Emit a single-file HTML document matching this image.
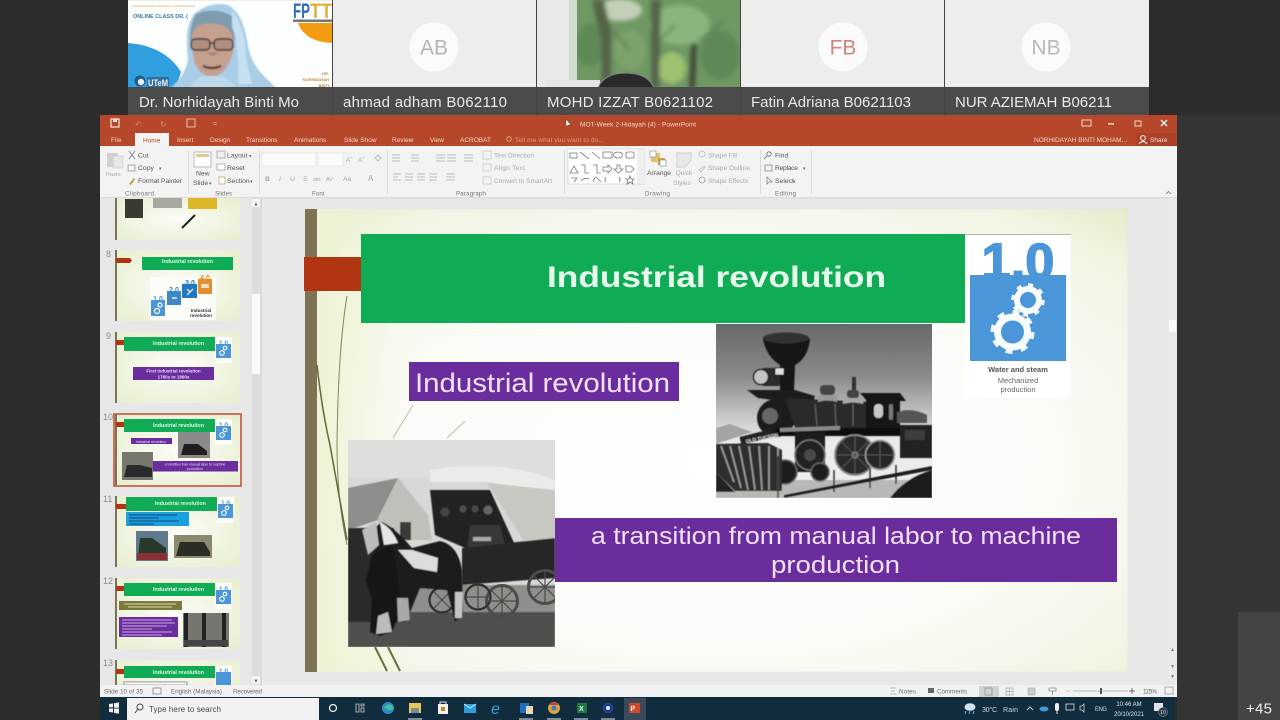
<!DOCTYPE html>
<html><head><meta charset="utf-8">
<style>
html,body{margin:0;padding:0;background:#2c2c2c;width:1280px;height:720px;overflow:hidden}
svg{display:block;position:absolute;left:0;top:0;filter:blur(.35px)}
text{font-family:"Liberation Sans",sans-serif}
.n{font-size:15px;fill:#e9e9e9}
.r{font-size:6.8px;fill:#555}
.d{font-size:6.5px;fill:#a8a8a8}
.g{font-size:6.3px;fill:#777}
.t{font-size:6.5px;fill:#f3d8cf}
.th{font-size:5.3px;font-weight:bold;fill:#dff5e6}
.num{font-size:9px;fill:#8a8a8a}
.s{font-size:6.3px;fill:#6a6a6a}
.v{font-size:7px;fill:#cfd8dd}
</style></head><body>
<svg width="1280" height="720" viewBox="0 0 1280 720" xmlns="http://www.w3.org/2000/svg">
<defs>
<filter id="b1" x="-10%" y="-10%" width="120%" height="120%"><feGaussianBlur stdDeviation=".9"/></filter>
<filter id="b2" x="-10%" y="-10%" width="120%" height="120%"><feGaussianBlur stdDeviation="2.200"/></filter>
<filter id="b05" x="-5%" y="-5%" width="110%" height="110%"><feGaussianBlur stdDeviation=".6"/></filter>
<radialGradient id="sl" cx=".5" cy=".55" r=".75"><stop offset="0" stop-color="#ffffff"/><stop offset=".5" stop-color="#fbfcf8"/><stop offset=".85" stop-color="#f1f5e3"/><stop offset="1" stop-color="#e3ecca"/></radialGradient>
<linearGradient id="lft" x1="0" y1="0" x2="1" y2="0"><stop offset="0" stop-color="#eef3d6"/><stop offset="1" stop-color="#eef3d6" stop-opacity="0"/></linearGradient>
<linearGradient id="sky" x1="0" y1="0" x2="0" y2="1"><stop offset="0" stop-color="#686868"/><stop offset=".3" stop-color="#8a8a8a"/><stop offset=".58" stop-color="#d4d4d4"/><stop offset=".68" stop-color="#ececec"/></linearGradient>
<radialGradient id="thg" cx=".5" cy=".5" r=".75"><stop offset="0" stop-color="#fbfcf6"/><stop offset="1" stop-color="#e6edcd"/></radialGradient>
<clipPath id="cL"><rect x="716" y="324" width="216" height="174"/></clipPath>
<clipPath id="cW"><rect x="348" y="440" width="207" height="207"/></clipPath>
<clipPath id="cT"><rect x="577" y="0" width="164" height="88"/></clipPath>
<clipPath id="cP"><rect x="128" y="1" width="204" height="87"/></clipPath>
</defs>

<rect width="1280" height="720" fill="#2c2c2c"/>
<rect x="1177" y="115" width="103" height="605" fill="#343434"/>
<rect x="1238" y="612" width="42" height="108" fill="#444543"/>
<text x="1246" y="713.500" font-size="15" fill="#eee" textLength="26">+45</text>

<!-- participant tiles -->
<rect x="128" y="0" width="1021" height="115" fill="#ededed"/>
<g clip-path="url(#cP)">
<rect x="128" y="0" width="204" height="88" fill="#fdfefe"/>
<path d="M128 43 Q165 46 181 72 L176 88 H128Z" fill="#2f9fe0"/>
<path d="M298 23 H332 V43 Q305 42 298 23Z" fill="#f39c12"/>
<text x="133" y="18" font-size="5.500" font-weight="bold" fill="#3c7a9e" textLength="55">ONLINE CLASS DR. (</text>
<text x="133" y="7" font-size="3" fill="#e39a3a" textLength="62">EXCELLENCE THROUGH COMPETENCE</text>
<text x="293" y="18" font-size="21" font-weight="bold" fill="#2f6fb0" textLength="17" lengthAdjust="spacingAndGlyphs">FP</text>
<text x="310" y="18" font-size="21" font-weight="bold" fill="#e8b040" textLength="22" lengthAdjust="spacingAndGlyphs">TT</text>
<rect x="293" y="19.500" width="39" height="2.500" fill="#777"/>
<text x="329" y="75" font-size="4" font-weight="bold" fill="#c9853a" text-anchor="end">DR.</text>
<text x="329" y="81" font-size="4" font-weight="bold" fill="#c9853a" text-anchor="end">NORHIDAYAH</text>
<text x="329" y="87" font-size="4" font-weight="bold" fill="#c9853a" text-anchor="end">BINTI</text>
<circle cx="140" cy="81" r="5.500" fill="#1d5c8a"/><circle cx="141" cy="82" r="3.200" fill="#eef"/>
<rect x="147" y="77" width="22" height="10" fill="#2f6f9c"/>
<text x="148" y="86" font-size="9" font-weight="bold" fill="#f2f7fb" textLength="20" lengthAdjust="spacingAndGlyphs">UTeM</text>
<g filter="url(#b1)">
<path d="M170 88 Q186 76 188 58 Q184 28 194 14 Q210 1 228 5 Q242 12 247 40 Q250 62 262 74 L276 88Z" fill="#a9cde6"/>
<path d="M196 14 Q214 6 232 16 Q236 30 236 40 L190 40 Q190 24 196 14Z" fill="#7e9cab"/>
<path d="M192 38 Q192 26 204 24 Q224 22 231 32 Q236 44 232 56 Q226 74 212 78 Q196 74 193 56Z" fill="#c4a08f"/>
<rect x="191" y="39" width="19" height="11" rx="4" fill="#b08d80" stroke="#35282a" stroke-width="1.400"/>
<rect x="214" y="39" width="19" height="11" rx="4" fill="#b08d80" stroke="#35282a" stroke-width="1.400"/>
<path d="M210 43H214" stroke="#35282a" stroke-width="1.400"/>
<path d="M203 66 Q212 70 221 66" stroke="#5b3a34" stroke-width="2.400" fill="none"/>
<path d="M207 52 Q212 60 218 52" fill="#ae8676"/>
<path d="M232 10 Q246 30 246 58 L252 84 L238 84 Q240 50 232 26Z" fill="#c6e0f1"/>
<path d="M190 88 Q194 80 204 76 L224 76 L238 88Z" fill="#bcd9ec"/>
</g>
</g>
<circle cx="434" cy="47" r="24.500" fill="#fbfbfb"/>
<text x="434" y="54.500" font-size="21" fill="#b4b4b4" text-anchor="middle">AB</text>
<rect x="537" y="0" width="204" height="88" fill="#e9e9e9"/>
<rect x="569" y="0" width="8" height="88" fill="#d6dad4"/>
<g clip-path="url(#cT)">
<rect x="577" y="0" width="164" height="88" fill="#6f9863"/>
<g filter="url(#b2)">
<ellipse cx="620" cy="10" rx="22" ry="11" fill="#c3cfb9"/>
<ellipse cx="590" cy="45" rx="14" ry="22" fill="#5f8a55"/>
<ellipse cx="630" cy="50" rx="16" ry="20" fill="#7ca36a"/>
<ellipse cx="680" cy="25" rx="30" ry="20" fill="#8ab67e"/>
<ellipse cx="672" cy="68" rx="14" ry="16" fill="#9fc070"/>
<ellipse cx="720" cy="55" rx="20" ry="25" fill="#5e8a58"/>
<path d="M592 0 H604 L611 30 L611 88 H602 L601 40Z" fill="#55634a"/>
<path d="M651 0H661L659 88H651Z" fill="#56634c"/>
<path d="M691 44 H697 L695 88H689Z" fill="#3f4a34"/>
<path d="M612 30L630 50M700 40L725 20M660 40L675 25" stroke="#55684a" stroke-width="1.600"/>
</g>
</g>
<path d="M546 88 V80 H600 V88Z" fill="#e6e6e6"/>
<path d="M598 88 Q604 73 626 73 Q648 73 654 88Z" fill="#2a2a2a" stroke="#888" stroke-width="1"/>
<circle cx="843" cy="47" r="24.500" fill="#fbfbfb"/>
<text x="843" y="54.500" font-size="21" fill="#d0837f" text-anchor="middle">FB</text>
<circle cx="1046" cy="47" r="24.500" fill="#fbfbfb"/>
<text x="1046" y="54.500" font-size="21" fill="#b9b9b9" text-anchor="middle">NB</text>
<rect x="128" y="87" width="1021" height="28" fill="#4b4b4b"/>
<path d="M332.500 0V115M536.500 0V115M740.500 0V115M944.500 0V115" stroke="#444" stroke-width="1"/>
<text class="n" x="139" y="107" textLength="160">Dr. Norhidayah Binti Mo</text>
<text class="n" x="343" y="107" textLength="164">ahmad adham B062110</text>
<text class="n" x="547" y="107" textLength="166">MOHD IZZAT B0621102</text>
<text class="n" x="751" y="107" textLength="160">Fatin Adriana B0621103</text>
<text class="n" x="955" y="107" textLength="157">NUR AZIEMAH B06211</text>

<!-- PowerPoint window -->
<rect x="100" y="115" width="1077" height="582" fill="#e8e8e8"/>
<rect x="100" y="115" width="1077" height="31" fill="#b7472a"/>
<rect x="135" y="133" width="34" height="14" fill="#f4f4f4"/>
<rect x="1136" y="133" width="40" height="13" fill="#ac4127"/>
<rect x="111" y="119" width="8" height="8" fill="none" stroke="#f4dcd4" stroke-width="1.300"/>
<rect x="113" y="119" width="4" height="3" fill="#f4dcd4"/>
<text x="135" y="127" font-size="8" fill="#cf8c78">↶</text><text x="160" y="127" font-size="8" fill="#cf8c78">↻</text>
<rect x="187" y="119" width="8" height="8" fill="none" stroke="#e8c2b6" stroke-width="1"/>
<text x="213" y="126" font-size="7" fill="#e8c2b6">=</text>
<path d="M566 119 L566 127 L568 125 L571 125Z" fill="#fff" stroke="#222" stroke-width=".4"/>
<text x="580" y="126.500" font-size="6.500" fill="#f3d8cf" textLength="116">MOT-Week 2-Hidayah (4) - PowerPoint</text>
<rect x="1082" y="120" width="9" height="6" fill="none" stroke="#f3d8cf" stroke-width="1"/>
<rect x="1108" y="123" width="6" height="1.500" fill="#f3d8cf"/>
<rect x="1135" y="121" width="6" height="5" fill="none" stroke="#f3d8cf" stroke-width="1"/>
<path d="M1161 120L1167 126M1167 120L1161 126" stroke="#fff" stroke-width="1.400"/>
<text class="t" x="111" y="142">File</text>
<text x="143" y="142.500" font-size="6.500" fill="#b7472a">Home</text>
<text class="t" x="177" y="142">Insert</text>
<text class="t" x="210" y="142">Design</text>
<text class="t" x="246" y="142">Transitions</text>
<text class="t" x="294" y="142">Animations</text>
<text class="t" x="344" y="142">Slide Show</text>
<text class="t" x="392" y="142">Review</text>
<text class="t" x="430" y="142">View</text>
<text class="t" x="460" y="142">ACROBAT</text>
<circle cx="509" cy="139" r="2.300" fill="none" stroke="#e8b5a5" stroke-width=".8"/>
<text x="515" y="142" font-size="6.500" fill="#dd9e8a" textLength="89">Tell me what you want to do...</text>
<text class="t" x="1034" y="142" textLength="93">NORHIDAYAH BINTI MOHAM...</text>
<circle cx="1143" cy="138" r="2.400" fill="none" stroke="#fff" stroke-width="1"/><path d="M1139 144Q1143 139 1147 144" fill="none" stroke="#fff" stroke-width="1"/>
<text x="1150" y="142" font-size="6.500" fill="#f8e6e0">Share</text>

<!-- ribbon -->
<rect x="100" y="146" width="1077" height="51" fill="#f3f3f3"/>
<rect x="100" y="197" width="1077" height="1.500" fill="#dcdcdc"/>
<path d="M188.500 150V194M259.500 150V194M387.500 150V194M564.500 150V194M760.500 150V194M811.500 150V194" stroke="#dadada" stroke-width="1"/>

<!-- clipboard -->
<rect x="107" y="153" width="11" height="14" fill="#cfcfcf"/><rect x="113" y="156" width="10" height="12" fill="#e6e6e6" stroke="#c4c4c4" stroke-width=".5"/>
<text x="106" y="176" font-size="5.800" fill="#aaa">Paste</text>
<path d="M129 151L135 159M135 151L129 159" stroke="#888" stroke-width="1"/>
<text class="r" x="138" y="157.500">Cut</text>
<rect x="128" y="165" width="7" height="6" fill="none" stroke="#999" stroke-width=".8"/>
<text class="r" x="138" y="170">Copy</text>
<text x="159" y="170" font-size="5" fill="#666">▾</text>
<path d="M129 184l5-6 1 1-4 6z" fill="#c49a3a"/>
<text class="r" x="138" y="183" textLength="44">Format Painter</text>
<text class="g" x="125" y="195.500" textLength="29">Clipboard</text>

<!-- slides group -->
<rect x="194" y="152" width="17" height="15" fill="#fff" stroke="#aaa" stroke-width=".8"/><rect x="196" y="154" width="13" height="3" fill="#e6c98c"/>
<text class="r" x="196" y="175.500">New</text>
<text class="r" x="193" y="185">Slide</text><text x="209" y="185" font-size="5" fill="#666">▾</text>
<rect x="217" y="151" width="8" height="7" fill="#eee" stroke="#999" stroke-width=".7"/>
<text class="r" x="227" y="157.500">Layout</text><text x="249" y="157.500" font-size="5" fill="#666">▾</text>
<rect x="217" y="164" width="8" height="6" fill="#fff" stroke="#999" stroke-width=".7"/>
<text class="r" x="227" y="170">Reset</text>
<rect x="219" y="177" width="6" height="7" fill="#fff" stroke="#b9a15f" stroke-width=".7"/>
<text class="r" x="227" y="183">Section</text><text x="250" y="183" font-size="5" fill="#666">▾</text>
<text class="g" x="215" y="195.500">Slides</text>

<!-- font -->
<rect x="262" y="153" width="54" height="13" fill="#fcfcfc" stroke="#e2e2e2" stroke-width=".7"/>
<rect x="318" y="153" width="25" height="13" fill="#fcfcfc" stroke="#e2e2e2" stroke-width=".7"/>
<text class="d" x="346" y="162">Aˆ</text><text class="d" x="358" y="162">Aˇ</text>
<path d="M375 158l3-3 3 3-3 3z" fill="none" stroke="#bcbcbc"/>
<g font-size="6.800" fill="#a4a4a4">
<text x="265" y="181" font-weight="bold">B</text><text x="279" y="181" font-style="italic">I</text><text x="290" y="181">U</text><text x="303" y="181">S</text><text x="313" y="181" font-size="5">abc</text><text x="326" y="181" font-size="5.500">AV</text><text x="343" y="181">Aa</text><text x="368" y="181" font-size="8">A</text>
</g>
<text class="g" x="312" y="195.500">Font</text>

<!-- paragraph -->
<g stroke="#bcbcbc" stroke-width=".9" fill="none">
<path d="M392 155h8M392 158h8M392 161h8"/>
<path d="M411 155h8M411 158h8M411 161h8"/>
<path d="M436 155h9M436 158h9M436 161h9"/>
<path d="M447 155h9M447 158h9M447 161h9"/>
<path d="M464 155h9M464 158h9M464 161h9"/>
<path d="M393 174h8M393 177h5M393 180h8"/>
<path d="M405 174h8M405 177h8M405 180h8"/>
<path d="M417 174h8M417 177h8M417 180h8"/>
<path d="M429 174h8M429 177h8M429 180h8"/>
<path d="M446 174h9M446 177h9M446 180h9"/>
</g>
<rect x="483" y="151" width="8" height="8" fill="none" stroke="#c2c2c2" stroke-width=".7"/>
<text class="d" x="494" y="157.500" textLength="40">Text Direction</text>
<rect x="483" y="164" width="8" height="7" fill="none" stroke="#c2c2c2" stroke-width=".7"/>
<text class="d" x="494" y="170" textLength="31">Align Text</text>
<rect x="483" y="177" width="8" height="7" fill="none" stroke="#c2c2c2" stroke-width=".7"/>
<text class="d" x="494" y="183" textLength="58">Convert to SmartArt</text>
<text class="g" x="456" y="195.500" textLength="30">Paragraph</text>

<!-- shapes gallery -->
<rect x="568" y="149" width="76" height="35" fill="#fff" stroke="#d2d2d2" stroke-width=".8"/>
<rect x="637" y="150" width="7" height="33" fill="#efefef"/>
<g fill="none" stroke="#777" stroke-width=".8">
<rect x="570" y="153" width="7" height="5"/><path d="M580 152l9 7M592 152l8 7"/>
<rect x="603" y="152" width="9" height="6"/><ellipse cx="618" cy="155" rx="4.500" ry="3"/><rect x="626" y="152" width="8" height="6" rx="1.500"/>
<path d="M570 173l4-7 4 7zM581 165h4v8h4M593 165h4v8h4M603 167h5v-2l4 4-4 4v-2h-5zM617 165h3v4h3l-4.500 4-4.500-4h3z"/>
<path d="M626 166h5l3 3-3 3h-5z"/>
<path d="M571 178h6M577 178l-3 4M581 181q3-4 8-2M593 182q2-6 4-4t4 4M606 177q-2 3 0 5M619 177q2 3 0 5M630 176l1 3h3l-2 2 1 3-3-2-3 2 1-3-2-2h3z"/>
</g>
<text x="647" y="175" font-size="6.800" fill="#555" textLength="24">Arrange</text>
<rect x="651" y="153" width="9" height="9" fill="#e2c36c"/><rect x="658" y="158" width="7" height="7" fill="#c9a24a"/>
<rect x="650" y="151" width="6" height="6" fill="#fff" stroke="#888" stroke-width=".6"/><rect x="660" y="160" width="6" height="6" fill="#fff" stroke="#888" stroke-width=".6"/>
<text x="684" y="175" font-size="6.500" fill="#a8a8a8" text-anchor="middle">Quick</text>
<text x="682" y="185" font-size="6.500" fill="#a8a8a8" text-anchor="middle">Styles</text>
<path d="M677 153h14v7l-6 7h-8z" fill="#e8e8e8" stroke="#c4c4c4" stroke-width=".7"/>
<circle cx="702" cy="154" r="3" fill="none" stroke="#bbb" stroke-width=".8"/>
<text class="d" x="708" y="157.500" textLength="29">Shape Fill</text>
<path d="M699 170l5-4 1 1-4 5z" fill="none" stroke="#bbb" stroke-width=".8"/>
<text class="d" x="708" y="170" textLength="42">Shape Outline</text>
<circle cx="702" cy="180" r="3" fill="none" stroke="#999" stroke-width=".8"/>
<text class="d" x="708" y="183" textLength="40">Shape Effects</text>
<text class="g" x="645" y="195.500" textLength="25">Drawing</text>

<!-- editing -->
<circle cx="769" cy="154" r="2.200" fill="none" stroke="#666" stroke-width=".8"/><path d="M767 156l-3 3" stroke="#666" stroke-width=".8"/>
<text class="r" x="775" y="157.500">Find</text>
<rect x="765" y="165" width="7" height="6" fill="none" stroke="#888" stroke-width=".8"/>
<text class="r" x="775" y="170" textLength="23">Replace</text><text x="803" y="170" font-size="5" fill="#666">▾</text>
<path d="M767 177v7l2-2 3 0z" fill="none" stroke="#888" stroke-width=".8"/>
<text class="r" x="775" y="183">Select</text><text x="793" y="183" font-size="5" fill="#666">▾</text>
<text class="g" x="775" y="195.500" textLength="21">Editing</text>
<path d="M1166 194l2.500-2.500 2.500 2.500" fill="none" stroke="#777" stroke-width=".8"/>

<!-- thumbnails pane -->
<rect x="100" y="198" width="152" height="487" fill="#e7e7e7"/>
<rect x="252" y="198" width="9" height="487" fill="#dcdcdc"/>
<rect x="252" y="294" width="8" height="80" fill="#fbfbfb"/>
<rect x="252" y="199" width="8" height="8" fill="#f4f4f4"/><text x="253.500" y="205.500" font-size="5" fill="#555">▲</text>
<rect x="252" y="676" width="8" height="8" fill="#f4f4f4"/><text x="253.500" y="682.500" font-size="5" fill="#555">▼</text>
<path d="M261.500 198V685" stroke="#d8d8d8"/>

<!-- thumb 7 -->
<rect x="115" y="198" width="125" height="42" fill="url(#thg)"/>
<rect x="115" y="198" width="2" height="42" fill="#7d7354"/>
<path d="M125 199h18v19h-18z" fill="#3a3a30"/><path d="M153 198h29v10h-29z" fill="#a8a8a0"/><path d="M188 198h29v11h-29z" fill="#dcb828"/>
<path d="M182 228l13-13" stroke="#222" stroke-width="2"/>
<!-- thumb 8 -->
<rect x="115" y="250" width="125" height="71" fill="url(#thg)"/>
<rect x="115" y="250" width="2" height="71" fill="#7d7354"/>
<path d="M116 258h14l2 2.500-2 2.500h-14z" fill="#b03510"/>
<rect x="142" y="257" width="91" height="13" fill="#0fac55"/>
<text class="th" x="162" y="263" textLength="51">Industrial revolution</text>
<rect x="150" y="277" width="66" height="43" fill="#fcfdf9"/>
<rect x="151" y="300" width="14" height="16" fill="#4a96d8"/><text x="158" y="301" font-size="7" font-weight="bold" fill="#4a96d8" text-anchor="middle">1.0</text>
<rect x="167" y="291" width="14" height="14" fill="#3f87c6"/><text x="174" y="292" font-size="7" font-weight="bold" fill="#3f87c6" text-anchor="middle">2.0</text>
<rect x="182" y="284" width="15" height="14" fill="#1f78c0"/><text x="190" y="285" font-size="7" font-weight="bold" fill="#1f78c0" text-anchor="middle">3.0</text>
<rect x="198" y="279" width="14" height="15" fill="#e58d2e"/><text x="205" y="280" font-size="7" font-weight="bold" fill="#e58d2e" text-anchor="middle">4.0</text>
<g fill="none" stroke="#fff" stroke-width="1.200"><circle cx="160" cy="305" r="2"/><circle cx="157" cy="311" r="2.500"/><path d="M172 298h5M187 289l3 3-3 3M193 289l-3 3"/></g>
<rect x="201" y="284" width="8" height="4" fill="#fff" opacity=".7"/>
<text x="201" y="312" font-size="4.500" font-weight="bold" fill="#333" text-anchor="middle">Industrial</text>
<text x="201" y="317" font-size="4.500" font-weight="bold" fill="#333" text-anchor="middle">revolution</text>
<!-- thumb 9 -->
<rect x="115" y="332" width="125" height="71" fill="url(#thg)"/>
<rect x="115" y="332" width="2" height="71" fill="#7d7354"/>
<rect x="116" y="340" width="8" height="5" fill="#b03510"/>
<rect x="124" y="337" width="91" height="14" fill="#0fac55"/>
<text class="th" x="153" y="345" textLength="51">Industrial revolution</text>
<rect x="215" y="337" width="17" height="26" fill="#fcfdfa"/><rect x="216" y="344" width="15" height="14" fill="#4a96d8"/><text x="223.500" y="345" font-size="6.500" font-weight="bold" fill="#4a96d8" text-anchor="middle">1.0</text>
<g fill="none" stroke="#fff" stroke-width="1.100"><circle cx="225" cy="348" r="1.800"/><circle cx="222" cy="353" r="2.300"/></g>
<rect x="133" y="367" width="81" height="13" fill="#6b2c9e"/>
<text x="173.500" y="372.500" font-size="4.500" font-weight="bold" fill="#eadcf5" text-anchor="middle">First industrial revolution</text>
<text x="173.500" y="378.500" font-size="4.500" font-weight="bold" fill="#eadcf5" text-anchor="middle">1760s to 1860s</text>
<!-- thumb 10 -->
<rect x="114" y="414" width="127" height="72" fill="url(#thg)" stroke="#c0583a" stroke-width="1.600"/>
<rect x="115" y="414" width="2" height="71" fill="#7d7354"/>
<rect x="116" y="422" width="8" height="5" fill="#b03510"/>
<rect x="124" y="419" width="91" height="13" fill="#0fac55"/>
<text class="th" x="153" y="427" textLength="51">Industrial revolution</text>
<rect x="215" y="419" width="17" height="26" fill="#fcfdfa"/><rect x="216" y="426" width="15" height="14" fill="#4a96d8"/><text x="223.500" y="427" font-size="6.500" font-weight="bold" fill="#4a96d8" text-anchor="middle">1.0</text>
<g fill="none" stroke="#fff" stroke-width="1.100"><circle cx="225" cy="430" r="1.800"/><circle cx="222" cy="435" r="2.300"/></g>
<rect x="131" y="438" width="41" height="6" fill="#6b2c9e"/><text x="151" y="443" font-size="3.500" fill="#eadcf5" text-anchor="middle">Industrial revolution</text>
<rect x="178" y="432" width="32" height="26" fill="#8a8a8a"/><path d="M181 455l3-11h14l9 7v4z" fill="#1e1e1e"/>
<rect x="122" y="452" width="31" height="28" fill="#77776f"/><path d="M124 477l3-12h13l12 3v9z" fill="#2a2a2a"/>
<rect x="153" y="461" width="85" height="10.500" fill="#6b2c9e"/>
<text x="195" y="465.500" font-size="3.300" fill="#eadcf5" text-anchor="middle">a transition from manual labor to machine</text>
<text x="195" y="470" font-size="3.300" fill="#eadcf5" text-anchor="middle">production</text>
<!-- thumb 11 -->
<rect x="115" y="496" width="125" height="71" fill="url(#thg)"/>
<rect x="115" y="496" width="2" height="71" fill="#7d7354"/>
<rect x="116" y="504" width="10" height="5" fill="#b03510"/>
<rect x="126" y="497" width="91" height="14" fill="#0fac55"/>
<text class="th" x="155" y="505" textLength="51">Industrial revolution</text>
<rect x="217" y="497" width="17" height="26" fill="#fcfdfa"/><rect x="218" y="504" width="15" height="14" fill="#4a96d8"/><text x="225.500" y="505" font-size="6.500" font-weight="bold" fill="#4a96d8" text-anchor="middle">1.0</text>
<g fill="none" stroke="#fff" stroke-width="1.100"><circle cx="227" cy="508" r="1.800"/><circle cx="224" cy="513" r="2.300"/></g>
<rect x="126" y="512" width="63" height="14" fill="#1a9fe0"/>
<path d="M129 515h48M129 518h30M129 521h50M129 524h25" stroke="#174a74" stroke-width=".9"/>
<rect x="136" y="531" width="32" height="30" fill="#5e7a8c"/><path d="M138 556l2-18h12l14 10v8z" fill="#2a3a2a"/><rect x="137" y="553" width="30" height="7" fill="#8a3034"/>
<rect x="174" y="535" width="38" height="23" fill="#8a8a70"/><path d="M176 556l4-14h24l6 10v4z" fill="#2e2a24"/>
<!-- thumb 12 -->
<rect x="115" y="578" width="125" height="71" fill="url(#thg)"/>
<rect x="115" y="578" width="2" height="71" fill="#7d7354"/>
<rect x="116" y="586" width="8" height="5" fill="#b03510"/>
<rect x="124" y="583" width="91" height="13" fill="#0fac55"/>
<text class="th" x="153" y="591" textLength="51">Industrial revolution</text>
<rect x="215" y="583" width="17" height="26" fill="#fcfdfa"/><rect x="216" y="590" width="15" height="14" fill="#4a96d8"/><text x="223.500" y="591" font-size="6.500" font-weight="bold" fill="#4a96d8" text-anchor="middle">1.0</text>
<g fill="none" stroke="#fff" stroke-width="1.100"><circle cx="225" cy="594" r="1.800"/><circle cx="222" cy="599" r="2.300"/></g>
<rect x="119" y="601" width="63" height="9" fill="#7a7a3a"/>
<path d="M124 604h52M128 607h44" stroke="#d8d8a8" stroke-width="1"/>
<rect x="119" y="617" width="59" height="20" fill="#6b2c9e"/>
<path d="M122 620h50M122 623h53M122 626h45M122 629h30M122 632h50M122 635h40" stroke="#c8a8e4" stroke-width=".9"/>
<rect x="183" y="613" width="46" height="34" fill="#77756f"/><path d="M186 613v34M204 613v34M224 613v34" stroke="#222" stroke-width="4"/><rect x="184" y="640" width="44" height="6" fill="#444"/>
<!-- thumb 13 -->
<rect x="115" y="660" width="125" height="25" fill="url(#thg)"/>
<rect x="115" y="660" width="2" height="25" fill="#7d7354"/>
<rect x="116" y="669" width="8" height="5" fill="#b03510"/>
<rect x="124" y="666" width="91" height="12" fill="#0fac55"/>
<text class="th" x="153" y="674" textLength="51">Industrial revolution</text>
<rect x="215" y="666" width="17" height="19" fill="#fcfdfa"/><rect x="216" y="672" width="15" height="13" fill="#4a96d8"/><text x="223.500" y="673" font-size="6.500" font-weight="bold" fill="#4a96d8" text-anchor="middle">1.0</text>
<rect x="124" y="682" width="63" height="3" fill="#fff" stroke="#333" stroke-width=".5"/>
<text class="num" x="106" y="257">8</text>
<text class="num" x="106" y="339">9</text>
<text class="num" x="103" y="420">10</text>
<text class="num" x="103" y="502">11</text>
<text class="num" x="103" y="584">12</text>
<text class="num" x="103" y="666">13</text>

<!-- main slide -->
<rect x="305" y="209" width="823" height="463" fill="url(#sl)" stroke="#e0e0e0" stroke-width=".5"/>
<rect x="317" y="209" width="90" height="463" fill="url(#lft)"/>
<rect x="305" y="209" width="12" height="463" fill="#7d7354"/>
<path d="M347 296 Q338 350 337 445 Q337 500 347 545" stroke="#7b8a56" stroke-width="1" fill="none"/>
<path d="M317 365 Q322 410 330 445 Q338 490 347 540" stroke="#5f6a34" stroke-width="1.500" fill="none"/>
<path d="M375 647 L387 671 M388 647 L400 671" stroke="#6a7040" stroke-width="2" fill="none"/>
<path d="M393 438 L413 405 M447 438 L465 421" stroke="#b4b8a0" stroke-width=".9" fill="none"/>
<rect x="304" y="257" width="57" height="34" fill="#b03510"/>
<rect x="361" y="234" width="604" height="89" fill="#0fac55"/>
<text x="547" y="287" font-size="30" font-weight="bold" fill="#e7f9ed" textLength="339" lengthAdjust="spacingAndGlyphs">Industrial revolution</text>
<rect x="409" y="362" width="270" height="39" fill="#6b2c9e"/>
<text x="415" y="392" font-size="27" fill="#f0e2fb" textLength="255" lengthAdjust="spacingAndGlyphs">Industrial revolution</text>

<!-- badge -->
<rect x="965" y="235" width="106" height="164" fill="#fff"/>
<rect x="965" y="234" width="106" height="1" fill="#aeb8a6"/>
<text x="1018" y="279" font-size="51" font-weight="bold" fill="#4a96d8" stroke="#4a96d8" stroke-width="1.500" text-anchor="middle" textLength="73" lengthAdjust="spacingAndGlyphs">1.0</text>
<rect x="970" y="275" width="96" height="86" fill="#4a96d8"/>
<g fill="none" stroke="#f7fbff">
<circle cx="1028" cy="300" r="11" stroke-width="6"/>
<circle cx="1028" cy="300" r="15" stroke-width="3.500" stroke-dasharray="5 6.780"/>
<circle cx="1012.500" cy="332" r="15" stroke-width="7"/>
<circle cx="1012.500" cy="332" r="20" stroke-width="4" stroke-dasharray="7 8.700"/>
</g>
<text x="1018" y="372" font-size="7.500" font-weight="bold" fill="#555" text-anchor="middle">Water and steam</text>
<text x="1018" y="383" font-size="7.500" fill="#666" text-anchor="middle">Mechanized</text>
<text x="1018" y="392" font-size="7.500" fill="#666" text-anchor="middle">production</text>

<!-- locomotive -->
<g clip-path="url(#cL)">
<rect x="716" y="324" width="216" height="174" fill="url(#sky)"/>
<g filter="url(#b05)">
<path d="M716 428l14-4 22 8-36 12z" fill="#a4a4a4"/>
<path d="M716 480H932V498H716Z" fill="#b8b8b4"/>
<path d="M763 339 Q786 328 810 339 Q808 358 795 365 L794 390 H780 L780 365 Q766 356 763 339Z" fill="#161616"/>
<ellipse cx="786" cy="338" rx="23" ry="5.500" fill="#333"/>
<rect x="762" y="368" width="18" height="18" rx="2" fill="#2a2a2a"/>
<circle cx="761" cy="377" r="7.500" fill="#c4c4c4" stroke="#222" stroke-width="1.500"/>
<rect x="775" y="368" width="9" height="7" fill="#e0e0e0" stroke="#222"/>
<path d="M747 390H795L815 396L812 405L758 398Z" fill="#1a1a1a"/>
<circle cx="776" cy="418" r="19" fill="#1a1a1a"/><circle cx="770" cy="416" r="8" fill="#666"/>
<path d="M785 398 L870 402 Q873 412 873 428 L795 428 Z" fill="#2c2c2c"/>
<path d="M815 404l2 22M835 404l1 22M853 404l0 22" stroke="#666" stroke-width="1.100"/>
<path d="M818 402 q9-3 19 0 v-7 h-19z" fill="#9a9a9a"/><rect x="820" y="385" width="15" height="10" rx="4" fill="#444"/>
<path d="M843 404 q10-3 20 0 v-7 h-20z" fill="#a8a8a8"/><rect x="847" y="390" width="12" height="8" rx="3" fill="#444"/><rect x="852" y="377" width="4" height="13" fill="#333"/>
<path d="M860 393H900L906 401H900V432H866V400Z" fill="#161616"/>
<rect x="874" y="404" width="9" height="14" rx="4" fill="#c8c8c8"/><rect x="889" y="404" width="4" height="16" rx="2" fill="#777"/>
<path d="M897 412q15-5 30 3v8H897z" fill="#555"/>
<rect x="900" y="425" width="32" height="33" fill="#242424"/>
<rect x="905" y="430" width="20" height="10" fill="#3e3e3e"/>
<rect x="775" y="428" width="125" height="8" fill="#111"/>
<rect x="795" y="432" width="30" height="40" fill="#1a1a1a"/>
<circle cx="810" cy="455" r="15" fill="#222" stroke="#777" stroke-width="1.500"/><circle cx="810" cy="455" r="6" fill="#4a4a4a"/>
<circle cx="855" cy="455" r="20" fill="#2a2a2a" stroke="#888" stroke-width="1.800"/><circle cx="855" cy="455" r="3.500" fill="#999"/>
<path d="M855 436v38M836 455h38M842 442l26 26M868 442l-26 26" stroke="#555" stroke-width="1.100"/>
<circle cx="880" cy="455" r="14.500" fill="#282828" stroke="#999" stroke-width="1.600"/>
<path d="M880 441v28M866 455h28" stroke="#555" stroke-width="1.100"/>
<rect x="780" y="428" width="60" height="4" fill="#8a8a8a" transform="rotate(-2 780 430)"/>
<rect x="740" y="433" width="32" height="8" fill="#222" transform="rotate(-14 756 437)"/>
<text x="745" y="441" font-size="5" font-weight="bold" fill="#ddd" transform="rotate(-12 756 437)">OLD TUCSON</text>
<circle cx="785" cy="472" r="12" fill="#1b1b1b" stroke="#666" stroke-width="1.500"/>
<circle cx="820" cy="472" r="9" fill="#1b1b1b" stroke="#666" stroke-width="1.500"/>
<path d="M716 444 L768 443 L782 450 V491 H735 L716 472 Z" fill="#2e2e2e"/>
<path d="M721 446l13 36M730 446l11 42M739 446l9 44M749 446l6 44M759 446l3 44M769 446v44M778 448v42" stroke="#9a9a9a" stroke-width="1.800"/>
<path d="M716 472L735 492H716Z" fill="#222"/>
<path d="M784 495 L932 466 V470 L784 498Z" fill="#1c1c1c"/>
<path d="M890 498 Q905 478 932 470 V498Z" fill="#1c1c1c"/>
<path d="M778 456V498M834 470V492M870 468V488M896 465V484" stroke="#222" stroke-width="1.400"/>
</g>
</g>

<!-- wagon -->
<g clip-path="url(#cW)">
<rect x="348" y="440" width="207" height="207" fill="#d8d8d6"/>
<g filter="url(#b05)">
<rect x="348" y="440" width="207" height="38" fill="#dededc"/>
<path d="M430 470 Q500 458 555 480 V495 L490 482 H430Z" fill="#ebebe9"/>
<path d="M348 488 L398 478 L425 512 L378 520 L348 530Z" fill="#8e8e8a"/>
<path d="M398 478 L428 515 L432 540 H378 L378 518Z" fill="#c0c0bb"/>
<rect x="400" y="522" width="11" height="18" fill="#3a3a3a"/>
<path d="M487 483 L555 490 V540 L525 543Z" fill="#c8c8c3"/>
<path d="M430 490 H490 L515 545 L470 550 L435 535Z" fill="#232323"/>
<circle cx="445" cy="512" r="4.500" fill="#444"/><circle cx="463" cy="509" r="3.500" fill="#505050"/><circle cx="475" cy="509" r="3.500" fill="#4a4a4a"/><circle cx="488" cy="510" r="4.500" fill="#666"/>
<path d="M470 525 h30 l6 25 -40 12z" fill="#383838"/>
<rect x="473" y="537" width="18" height="4" fill="#aaa"/>
<path d="M462 548 L555 538 V578 L462 585Z" fill="#272727"/>
<rect x="348" y="585" width="207" height="30" fill="#8e8e8a"/>
<rect x="348" y="612" width="207" height="35" fill="#50504c"/>
<rect x="348" y="528" width="46" height="94" fill="#2b2b2b"/>
</g>
<g fill="none" stroke="#333" stroke-width="3">
<circle cx="502" cy="601" r="15.500" stroke="#4c4c48"/>
<circle cx="545" cy="587" r="16.500" stroke="#4c4c48"/>
<circle cx="478" cy="597" r="12.500" stroke-width="2.400"/>
<circle cx="442" cy="600" r="12.500" stroke-width="2.400"/>
</g>
<g stroke="#4a4a46" stroke-width="1.200" fill="none">
<path d="M491 590L513 612M513 590L491 612M502 586V616M487 601H517"/>
<path d="M533 575L557 599M557 575L533 599M545 571V603M529 587H555"/>
<path d="M434 592L450 608M450 592L434 608M478 585V609M466 597H490"/>
</g>
<g filter="url(#b05)">
<path d="M372 530 L382 522 Q395 528 412 548 L440 541 Q458 545 462 570 L463 612 L455 622 L447 590 L420 588 L406 622 L394 622 L392 590 L372 575Z" fill="#1e1e1e"/>
<path d="M380 522 Q392 528 398 543 L384 545 Z" fill="#e6e6e6"/>
<path d="M398 550 L412 550 L438 558 L437 572 L414 568 Z" fill="#dcdcdc"/>
<path d="M362 530 L376 522 L379 545 L368 555Z" fill="#bcbcbc"/>
<path d="M372 555 L392 545 L398 578 L402 608 L392 632 L380 636 L370 632 L372 600 L366 580Z" fill="#141414"/>
<path d="M378 616 L388 612 L392 632 L376 634Z" fill="#bcbcbc"/>
<path d="M397 598 L408 598 L410 620 L398 622Z" fill="#a8a8a8"/>
<path d="M455 592 L463 592 L462 618 L455 618Z" fill="#c4c4c4"/>
</g>
</g>

<rect x="555" y="518" width="562" height="64" fill="#6b2c9e"/>
<text x="591" y="544" font-size="24" fill="#f0e2fb" textLength="490" lengthAdjust="spacingAndGlyphs">a transition from manual labor to machine</text>
<text x="771" y="573" font-size="24" fill="#f0e2fb" textLength="129" lengthAdjust="spacingAndGlyphs">production</text>

<!-- right scrollbar -->
<rect x="1168" y="198" width="9" height="487" fill="#e9e9e9"/>
<rect x="1169" y="320" width="7" height="12" fill="#fbfbfb"/>
<text x="1170" y="651" font-size="5" fill="#777">▲</text>
<text x="1170" y="668" font-size="5" fill="#777">▼</text>
<text x="1170" y="678" font-size="5" fill="#777">▼</text>

<!-- status bar -->
<rect x="100" y="685" width="1077" height="12" fill="#f2f2f2"/>
<text class="s" x="104" y="693.500" textLength="39">Slide 10 of 35</text>
<rect x="153" y="688" width="8" height="6" fill="none" stroke="#777" stroke-width=".7"/>
<text class="s" x="171" y="693.500" textLength="51">English (Malaysia)</text>
<text class="s" x="233" y="693.500" textLength="29">Recovered</text>
<path d="M890 688h6M891 691h4M890 694h6" stroke="#aaa" stroke-width=".8"/>
<text class="s" x="899" y="693.500" textLength="17">Notes</text>
<rect x="928" y="688" width="6" height="5" fill="#666"/>
<text class="s" x="937" y="693.500" textLength="30">Comments</text>
<rect x="979" y="686" width="20" height="11" fill="#d2d2d2"/>
<rect x="985" y="688" width="7" height="7" fill="none" stroke="#888" stroke-width=".7"/>
<path d="M1006 688h7v7h-7zM1006 691.500h7M1009.500 688v7" fill="none" stroke="#aaa" stroke-width=".7"/>
<rect x="1028" y="688" width="7" height="7" fill="#ccc" stroke="#999" stroke-width=".5"/>
<path d="M1049 688h7v3h-7zM1052.500 691v4" fill="none" stroke="#888" stroke-width=".8"/>
<path d="M1066 691h4M1073 691h55" stroke="#aaa" stroke-width=".8"/>
<rect x="1100" y="688" width="2" height="6" fill="#555"/>
<path d="M1129 691h6M1132 688v6" stroke="#666" stroke-width=".9"/>
<text class="s" x="1143" y="693.500" textLength="14">115%</text>
<rect x="1165" y="687" width="8" height="7" fill="none" stroke="#999" stroke-width=".8"/>

<!-- taskbar -->
<rect x="100" y="697" width="1075" height="23" fill="#112c3d"/>
<path d="M109 704l4-.6v4h-4zM114 703.200l5-.8v5.300h-5zM109 708.500h4v4l-4-.6zM114 708.500h5v5.200l-5-.8z" fill="#eee"/>
<rect x="127" y="698" width="192" height="22" fill="#f2f2f2"/>
<circle cx="140" cy="707" r="3" fill="none" stroke="#444" stroke-width="1"/><path d="M138 709l-3 4" stroke="#444" stroke-width="1"/>
<text x="149" y="712" font-size="7.800" fill="#444" textLength="72">Type here to search</text>
<circle cx="333" cy="708" r="3.500" fill="none" stroke="#eee" stroke-width="1.300"/>
<path d="M356 704h3v8h-3zM361 704h3v2h-3zM361 708h3v4h-3z" fill="none" stroke="#ccc" stroke-width=".8"/>
<circle cx="388" cy="708" r="6" fill="#2a8cc9"/><path d="M384 708q3-5 7-3 3 2 2 5h-5q-1-2-4-2z" fill="#42c29a"/>
<rect x="409" y="703" width="12" height="10" fill="#e8c65a"/><rect x="411" y="708" width="8" height="5" fill="#7a8e98"/>
<rect x="438" y="704" width="10" height="10" fill="#f2f2f2"/><path d="M440 704v-2h6v2" fill="none" stroke="#eee"/><rect x="441" y="707" width="4" height="4" fill="#b98c2c"/>
<rect x="464" y="704" width="12" height="9" fill="#2f9ed8"/><path d="M464 704l6 4 6-4" fill="none" stroke="#cfeaf8"/>
<text x="491" y="714" font-size="16" font-style="italic" fill="#3aa3e0">e</text>
<rect x="520" y="703" width="9" height="10" fill="#1d6fc0"/><rect x="526" y="706" width="7" height="8" fill="#e8d9b0"/>
<circle cx="554" cy="708" r="6" fill="#d9a53c"/><circle cx="554" cy="708" r="2.500" fill="#3a7ec0"/><path d="M549 705a6 6 0 0 1 10 0h-5z" fill="#c7443a"/>
<rect x="577" y="703" width="10" height="10" fill="#1c7a44"/><text x="579" y="711" font-size="7" font-weight="bold" fill="#fff">X</text>
<circle cx="608" cy="708" r="5.500" fill="#1f3f90"/><circle cx="608" cy="708" r="2" fill="#e9eef8"/>
<rect x="624" y="698" width="22" height="22" fill="#3a4a58"/>
<rect x="629" y="703" width="11" height="10" fill="#d04a2a"/><text x="630.500" y="711" font-size="7" font-weight="bold" fill="#fff">P</text>
<g fill="#7a8e9c">
<rect x="408" y="718" width="14" height="2"/><rect x="519" y="718" width="14" height="2"/><rect x="547" y="718" width="14" height="2"/><rect x="574" y="718" width="14" height="2"/><rect x="601" y="718" width="14" height="2"/>
</g>
<ellipse cx="970" cy="707" rx="5.500" ry="3.800" fill="#cfe5f2"/><path d="M966 711l-1 3M970 711l-1 3M974 711l-1 3" stroke="#6ab2e0"/>
<text class="v" x="982" y="712" textLength="15">30°C</text>
<text class="v" x="1003" y="712" textLength="15">Rain</text>
<path d="M1027 710l3-3 3 3" fill="none" stroke="#ccc" stroke-width="1"/>
<ellipse cx="1044" cy="709" rx="4.500" ry="2.500" fill="#3c9adf"/>
<rect x="1055" y="703" width="4" height="8" rx="2" fill="#eee"/><path d="M1057 711v3" stroke="#eee"/>
<rect x="1066" y="704" width="8" height="6" fill="none" stroke="#ccc" stroke-width=".9"/>
<path d="M1080 706h2l2-2v8l-2-2h-2z" fill="none" stroke="#ccc" stroke-width=".8"/>
<text x="1095" y="711" font-size="6" fill="#cfd8dd" textLength="12">ENG</text>
<text x="1129" y="706" font-size="6" fill="#e0e6ea" text-anchor="middle">10:46 AM</text>
<text x="1129" y="716" font-size="6" fill="#e0e6ea" text-anchor="middle">20/10/2021</text>
<rect x="1154" y="703" width="9" height="8" fill="#dfe5e9"/>
<circle cx="1163" cy="712" r="4.500" fill="#2a3b47" stroke="#889" stroke-width=".6"/>
<text x="1163" y="714" font-size="5" fill="#ddd" text-anchor="middle">10</text>
</svg>
</body></html>
